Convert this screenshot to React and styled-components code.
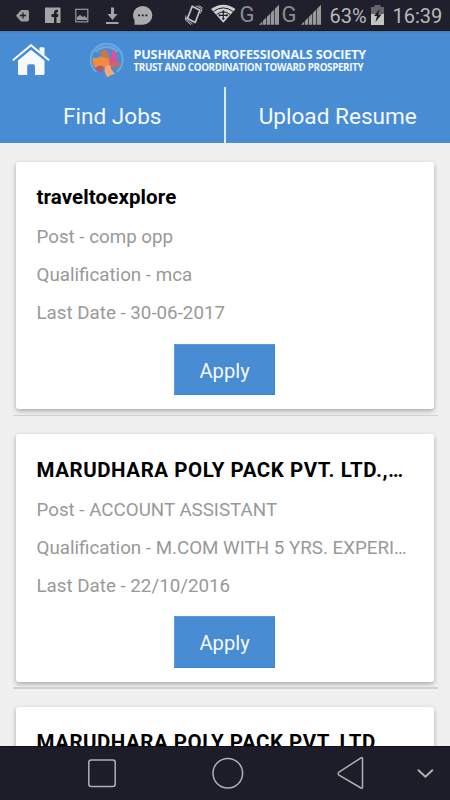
import React from "react";
import styled, { createGlobalStyle } from "styled-components";

const GlobalStyle = createGlobalStyle`
  * { box-sizing: border-box; }
  body { margin: 0; background: #f0f0f0; font-family: Roboto, "Liberation Sans", sans-serif; }
`;

const Screen = styled.div`
  width: 450px;
  height: 800px;
  display: flex;
  flex-direction: column;
  overflow: hidden;
  background: #f0f0f0;
`;

const StatusBar = styled.div`
  height: 31px;
  flex: none;
  display: flex;
  align-items: flex-start;
  background: #1f202b;
  border-bottom: 1px solid #1a1819;
  color: #98989c;
`;

const StatusIcon = styled.svg`
  display: block;
  flex: none;
  width: ${(p) => p.$w}px;
  height: 30px;
  margin-left: ${(p) => p.$gap || 0}px;
`;

const StatusText = styled.span`
  flex: none;
  width: ${(p) => p.$w}px;
  margin-left: ${(p) => p.$gap || 0}px;
  font-size: ${(p) => p.$size || 20}px;
  line-height: ${(p) => p.$line || 32}px;
  white-space: nowrap;
  color: ${(p) => p.$color || "#b9b9bc"};
`;

const Header = styled.header`
  height: 112px;
  flex: none;
  display: flex;
  flex-direction: column;
  background: linear-gradient(#4480bd 0, #488cd3 3px, #488cd3 100%);
`;

const Brand = styled.div`
  height: 56px;
  flex: none;
  display: flex;
  align-items: flex-start;
  padding: 12px 0 0 12px;
`;

const HomeIcon = styled.svg`
  display: block;
  width: 38px;
  height: 36px;
  margin-top: 1px;
`;

const Logo = styled.svg`
  display: block;
  width: 36px;
  height: 36px;
  margin-left: 39px;
`;

const BrandText = styled.div`
  display: flex;
  flex-direction: column;
  margin: 4px 0 0 8.5px;
  font-family: "Open Sans", "Noto Sans", sans-serif;
  color: #f4f8fd;
  white-space: nowrap;
`;

const BrandName = styled.span`
  font-size: 12.6px;
  line-height: 15px;
  font-weight: 700;
  letter-spacing: -0.16px;
`;

const BrandMotto = styled.span`
  font-size: 9.8px;
  line-height: 12px;
  font-weight: 700;
  letter-spacing: -0.34px;
`;

const Tabs = styled.nav`
  height: 56px;
  flex: none;
  display: flex;
`;

const Tab = styled.a`
  flex: 1;
  display: flex;
  justify-content: center;
  font-size: 22.6px;
  line-height: 60px;
  color: #f3f8fd;
  & + & { border-left: 2px solid #dce9f7; margin-left: -1px; }
`;

const List = styled.main`
  flex: 1;
  min-height: 0;
  overflow: hidden;
  padding: 18.7px 12.5px 0;
`;

const Item = styled.div`
  height: 272.5px;
`;

const Card = styled.article`
  height: 247.5px;
  margin: 0 3.5px;
  padding: 16.4px 21px 0 20.5px;
  background: #fff;
  border-radius: 3px;
  box-shadow: 0 2px 5px rgba(0, 0, 0, 0.3);
`;

const Divider = styled.div`
  height: 1.5px;
  margin-top: 5.5px;
  background: #d2d2d2;
`;

const Title = styled.h2`
  margin: 0;
  height: 40px;
  font-size: 20.5px;
  font-weight: 700;
  line-height: 39px;
  letter-spacing: ${(p) => p.$track}px;
  color: #000;
  white-space: nowrap;
`;

const Detail = styled.p`
  margin: 0;
  height: 38px;
  font-size: 18.75px;
  line-height: 38px;
  color: #999;
  white-space: nowrap;
`;

const Apply = styled.button`
  display: block;
  width: 101px;
  height: 51.5px;
  margin: 11.7px 0 0 137.6px;
  padding: 2px 0 0;
  border: 1px solid #2f89d6;
  border-top-color: #5c9ad9;
  border-left-color: #5c9ad9;
  background: #488cd3;
  color: #f3f8fd;
  font: 20.2px Roboto, sans-serif;
`;

const NavBar = styled.footer`
  height: 54px;
  flex: none;
  display: flex;
  align-items: flex-start;
  background: #1c1d28;
  border-top: 1px solid #111219;
`;

const NavIcon = styled.svg`
  display: block;
  flex: none;
  width: ${(p) => p.$w}px;
  height: 53px;
  margin-left: ${(p) => p.$gap}px;
  fill: none;
  stroke: #b1b1b3;
  stroke-width: 1.5;
  stroke-linejoin: round;
  stroke-linecap: round;
`;

const Signal = ({ gap }) => (
  <StatusIcon $w={20} $gap={gap} viewBox="0 0 20 30" fill="currentColor">
    <path d="M0 24.7L3.3 21.4V24.7ZM4 20.7L7.3 17.4V24.7H4ZM8 16.7L11.3 13.4V24.7H8ZM12 12.7L15.3 9.4V24.7H12ZM16 8.7L20 4.7V24.7H16Z" />
  </StatusIcon>
);

const jobs = [
  { id: 1, title: "traveltoexplore", track: 0.1, details: ["Post - comp opp", "Qualification - mca", "Last Date - 30-06-2017"] },
  { id: 2, title: "MARUDHARA POLY PACK PVT. LTD.,…", track: 0.55, details: ["Post - ACCOUNT ASSISTANT", "Qualification - M.COM WITH 5 YRS. EXPERI…", "Last Date - 22/10/2016"] },
  { id: 3, title: "MARUDHARA POLY PACK PVT. LTD", track: 0.5 },
];

export default function App() {
  return (
    <Screen>
      <GlobalStyle />
      <StatusBar>
        <StatusIcon $w={14} $gap={16} viewBox="0 0 14 30">
          <path d="M5 10H11Q13 10 13 12V19.5Q13 21.5 11 21.5H5L0 15.7Z" fill="#9b9b9e" />
          <path d="M7 12.5V18.5M4 15.5H10" stroke="#1f202b" strokeWidth="1.3" />
        </StatusIcon>
        <StatusIcon $w={16} $gap={15} viewBox="0 0 16 30">
          <rect y="7.5" width="15.5" height="15.5" rx=".5" fill="#a4a4a7" />
          <path d="M9 23V17H6.5V14H9V12.5Q9 9.2 13 9.8V12.3Q11.5 12 11.5 13.3V14H13.5L13 17H11.5V23Z" fill="#1f202b" />
        </StatusIcon>
        <StatusIcon $w={14} $gap={14} viewBox="0 0 14 30" fill="none">
          <rect x=".8" y="9.3" width="12" height="12.5" stroke="#98989b" strokeWidth="1.2" />
          <path d="M2 20V17L5 15L8 17L9.5 16L12 18V20Z" fill="#98989b" />
        </StatusIcon>
        <StatusIcon $w={13} $gap={17} viewBox="0 0 13 30" fill="#a4a4a7">
          <path d="M5 7.5H8V14H11.5L6.5 20L1.5 14H5ZM0 22H12.5V24H0Z" />
        </StatusIcon>
        <StatusIcon $w={20} $gap={14} viewBox="0 0 20 30">
          <path d="M9.7 6A9.5 9.3 0 1 1 9.7 24.8H1.5V20Q0 18 0 15A9.7 9.2 0 0 1 9.7 6Z" fill="#acacae" />
          <path d="M5 15.3H7M8.7 15.3H10.7M12.4 15.3H14.4" stroke="#1f202b" strokeWidth="1.8" />
        </StatusIcon>
        <StatusIcon $w={18} $gap={32} viewBox="0 0 18 30" fill="none" stroke="#c4c4c6" strokeWidth="1.4" strokeLinejoin="round">
          <path d="M7.2 6.2L14.9 10.2L10.2 22.5L2.5 18.5Z" strokeWidth="1.7" />
          <path d="M11 5.8L17 9L15.5 13.5M13.5 5.6L17.6 7.8M.9 15.5L.4 20L6 24.8M2 17L1.6 19.6L7.6 24" strokeWidth=".9" />
        </StatusIcon>
        <StatusIcon $w={25} $gap={8} viewBox="0 0 25 30">
          <path d="M0 9Q12.3 .5 24.5 9L12.3 22.7Z" fill="#cfcfd0" />
          <path d="M2.5 11.4Q12.3 4.4 22 11.4M5.5 14.6Q12.3 9 19 14.6" fill="none" stroke="#1f202b" strokeWidth="1" />
          <path d="M12.3 10L14 12.5H12.9V14.7H15.5V13.4L17.3 15.3L15.5 17.1V15.9H12.9V18.2H14L12.3 20.2L10.6 18.2H11.7V15.9H9.1V17.1L7.3 15.3L9.1 13.4V14.7H11.7V12.5H10.6Z" fill="#1f202b" />
        </StatusIcon>
        <StatusText $w={17} $gap={3.5} $size={22} $line={30} $color="#8b8b91">G</StatusText>
        <Signal gap={2.5} />
        <StatusText $w={17} $gap={2.5} $size={22} $line={30} $color="#8b8b91">G</StatusText>
        <Signal gap={2.7} />
        <StatusText $w={37} $gap={8.3}>63%</StatusText>
        <StatusIcon $w={13} $gap={5} viewBox="0 0 13 30">
          <path d="M3.5 5H9.5V7H13V14H0V7H3.5Z" fill="#66666a" />
          <path d="M0 14H13V25H0Z" fill="#c4c4c5" />
          <path d="M8.7 9L3 16H6L4.5 22L10.5 14.5H7.3Z" fill="#1b1b20" />
        </StatusIcon>
        <StatusText $w={54} $gap={8}>16:39</StatusText>
      </StatusBar>

      <Header>
        <Brand>
          <HomeIcon viewBox="0 0 38 36" fill="#f8f9fb">
            <path d="M1.5 15.8L19 1.2L36.5 15.8" fill="none" stroke="#f8f9fb" strokeWidth="2" strokeLinecap="round" />
            <path d="M27.5 4.2Q27.5 3.2 28.5 3.2H31.5Q32.5 3.2 32.5 4.2V11.3L27.5 7Z" />
            <path d="M6 16.5L19 5.7L32.5 16.5V29.5Q32.5 31 31 31H23V22.5Q23 20.2 21 20.2H17.2Q15.2 20.2 15.2 22.5V31H7.5Q6 31 6 29.5Z" />
          </HomeIcon>
          <Logo viewBox="0 0 108 108">
            <path d="M22 87A48 48 0 1 1 84 87" fill="none" stroke="#6aa9df" strokeWidth="6" />
            <path d="M20 27A44 44 0 0 1 86 27" fill="none" stroke="#6aa9df" strokeWidth="7" />
            <circle cx="56" cy="60" r="13" fill="#dd6f60" />
            <path d="M52 49L28 27Q42 27 46 19Q60 25 62 47L55 60Z" fill="#cf7451" />
            <path d="M57 56Q72 46 67 21Q85 24 84 46Q80 68 60 71L50 68Z" fill="#e24c9a" />
            <path d="M60 66Q71 62 77 52Q89 54 95 66Q80 78 60 71Z" fill="#c96962" />
            <path d="M49 62L64 67Q66 82 78 92Q65 95 55 103Q43 87 48 70Z" fill="#f2a779" />
            <path d="M50 66Q38 79 43 85L29 88Q23 80 18 71L38 62Z" fill="#b55870" />
            <path d="M11 44Q28 48 34 40L53 44Q64 52 61 65L45 72Q33 62 20 74Q8 61 11 44Z" fill="#f28b3b" />
          </Logo>
          <BrandText>
            <BrandName>PUSHKARNA PROFESSIONALS SOCIETY</BrandName>
            <BrandMotto>TRUST AND COORDINATION TOWARD PROSPERITY</BrandMotto>
          </BrandText>
        </Brand>
        <Tabs>
          <Tab>Find Jobs</Tab>
          <Tab>Upload Resume</Tab>
        </Tabs>
      </Header>

      <List>
        {jobs.map((job) => (
          <Item key={job.id}>
            <Card>
              <Title $track={job.track}>{job.title}</Title>
              {job.details && (
                <>
                  {job.details.map((line) => (
                    <Detail key={line}>{line}</Detail>
                  ))}
                  <Apply>Apply</Apply>
                </>
              )}
            </Card>
            <Divider />
          </Item>
        ))}
      </List>

      <NavBar>
        <NavIcon $w={28} $gap={88} viewBox="0 0 28 53"><rect x=".8" y="13" width="26.4" height="26.4" rx="2.5" /></NavIcon>
        <NavIcon $w={32} $gap={95.5} viewBox="0 0 32 53"><circle cx="15.8" cy="26.3" r="14.8" /></NavIcon>
        <NavIcon $w={27} $gap={93} viewBox="0 0 27 53"><path d="M24 10.8Q25.5 10 25.5 12V40Q25.5 42 24 41L2 28.2Q.2 26.8 2 25.2Z" /></NavIcon>
        <NavIcon $w={17} $gap={53} viewBox="0 0 17 53"><path d="M1.5 23.3L8.4 29.7L15.3 23.3" strokeWidth="2" /></NavIcon>
      </NavBar>
    </Screen>
  );
}
